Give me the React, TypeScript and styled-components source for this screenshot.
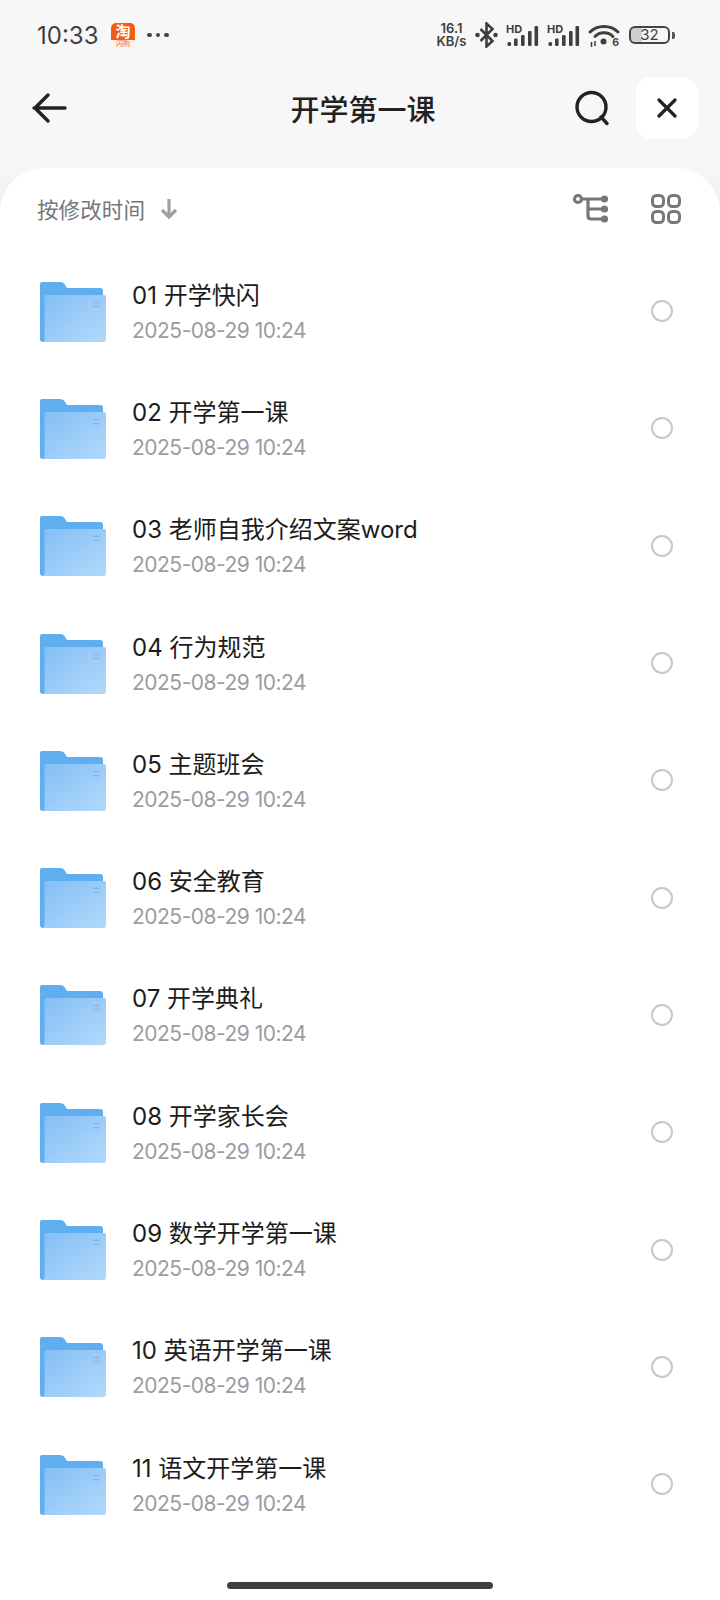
import React from "react";
import styled, { createGlobalStyle } from "styled-components";

const FONT = `Inter, "Noto Sans CJK SC", sans-serif`;

const FILES = [
  "01 开学快闪",
  "02 开学第一课",
  "03 老师自我介绍文案word",
  "04 行为规范",
  "05 主题班会",
  "06 安全教育",
  "07 开学典礼",
  "08 开学家长会",
  "09 数学开学第一课",
  "10 英语开学第一课",
  "11 语文开学第一课",
];

const GlobalStyle = createGlobalStyle`
  html, body {
    margin: 0;
    padding: 0;
    background: #f7f7f7;
  }
`;

const SPage = styled.div`
  width: 720px;
  height: 1600px;
  display: flex;
  flex-direction: column;
  background: #f7f7f7;
  font-family: ${FONT};
  overflow: hidden;
`;

const SStatusBar = styled.div`
  height: 70px;
  flex: none;
  display: flex;
  align-items: center;
  padding: 0 45px 0 37px;
  color: #3f3f3f;
`;

const STime = styled.div`
  font-size: 24px;
  font-weight: 400;
  width: 74px;
`;

const SAppBadge = styled.div`
  width: 24px;
  height: 25px;
  border-radius: 5px;
  overflow: hidden;
  background: #fff3ea;
  display: flex;
  flex-direction: column;
  align-items: center;
`;

const SAppBadgeTop = styled.div`
  width: 100%;
  height: 17px;
  background: #f25c13;
  color: #fff;
  font-size: 15px;
  font-weight: 700;
  line-height: 17px;
  text-align: center;
`;

const SAppBadgeBottom = styled.div`
  font-size: 7px;
  line-height: 8px;
  color: #e0703a;
`;

const SDots = styled.div`
  display: flex;
  gap: 4px;
  margin-left: 12px;
`;

const SDot = styled.span`
  width: 4.5px;
  height: 4.5px;
  border-radius: 50%;
  background: #444;
`;

const SStatusRight = styled.div`
  margin-left: auto;
  display: flex;
  align-items: center;
`;

const SSpeed = styled.div`
  font-size: 13px;
  font-weight: 600;
  line-height: 13px;
  text-align: center;
  width: 33px;
  color: #3f3f3f;
`;

const SSignal = styled.div`
  position: relative;
  width: 33px;
  height: 21px;
  margin-left: 8px;
`;

const SHd = styled.span`
  position: absolute;
  left: 0;
  top: 0;
  font-size: 11px;
  line-height: 9px;
  font-weight: 700;
  color: #3f3f3f;
`;

const SWifi = styled.div`
  position: relative;
  width: 32px;
  height: 25px;
  margin-left: 8px;
`;

const SWifiBand = styled.span`
  position: absolute;
  right: 1px;
  bottom: 0;
  font-size: 10.5px;
  line-height: 11px;
  font-weight: 700;
  color: #3f3f3f;
`;

const SBattery = styled.div`
  width: 41px;
  height: 18px;
  border: 2px solid #444;
  border-radius: 6px;
  box-sizing: border-box;
  margin-left: 9px;
  font-size: 15px;
  line-height: 14px;
  text-align: center;
  color: #3f3f3f;
  background: linear-gradient(90deg, #cfcfcf 0 30%, transparent 30%);
  background-clip: padding-box;
`;

const SBatteryNub = styled.span`
  width: 3px;
  height: 7px;
  border-radius: 0 2px 2px 0;
  background: #555;
  margin-left: 2px;
`;

const SHeader = styled.div`
  height: 98px;
  flex: none;
  display: flex;
  align-items: center;
  padding: 0 22px 22px 32px;
  box-sizing: border-box;
  position: relative;
`;

const STitle = styled.div`
  position: absolute;
  left: 0;
  right: 0;
  text-align: center;
  font-size: 29px;
  font-weight: 500;
  color: #222;
  padding-left: 6px;
`;

const SHeaderRight = styled.div`
  margin-left: auto;
  display: flex;
  align-items: center;
  gap: 26px;
`;

const SCloseButton = styled.div`
  width: 62px;
  height: 62px;
  background: #fff;
  border-radius: 15px;
  display: flex;
  align-items: center;
  justify-content: center;
`;

const SCardBack = styled.div`
  flex: 1;
  display: flex;
  background: linear-gradient(#f7f7f7, #eeeef4 44px);
`;

const SCard = styled.div`
  flex: 1;
  background: #fff;
  border-radius: 44px 44px 0 0;
  display: flex;
  flex-direction: column;
`;

const SSortBar = styled.div`
  height: 86px;
  flex: none;
  display: flex;
  align-items: center;
  padding: 0 39px 0 37px;
  box-sizing: border-box;
`;

const SSortLabel = styled.div`
  font-size: 21.6px;
  color: #777;
  margin-bottom: 6px;
`;

const SSortIcons = styled.div`
  margin-left: auto;
  display: flex;
  align-items: center;
  gap: 42px;
  margin-bottom: 4px;
`;

const SRow = styled.div`
  height: 117.3px;
  flex: none;
  display: flex;
  align-items: center;
  padding: 0 47px 0 40px;
`;

const SText = styled.div`
  margin-left: 26px;
  flex: 1;
  display: flex;
  flex-direction: column;
  gap: 4px;
`;

const SName = styled.div`
  font-size: 24px;
  line-height: 32px;
  color: #1c1c1c;
`;

const SDate = styled.div`
  font-size: 21px;
  line-height: 30px;
  letter-spacing: -0.5px;
  color: #9c9c9c;
`;

const SRadio = styled.div`
  width: 22px;
  height: 22px;
  border: 2px solid #c8c8c8;
  border-radius: 50%;
  box-sizing: border-box;
  margin-bottom: 3px;
`;

const SHomeBar = styled.div`
  width: 266px;
  height: 7px;
  flex: none;
  border-radius: 4px;
  background: #404040;
  margin: auto auto 11px;
`;

const Bluetooth = () => (
  <svg width="23" height="26" viewBox="0 0 23 26" style={{ marginLeft: 7 }}>
    <path d="M5.500 7l12 12-6 5.500V1.500L17.500 7l-12 12" fill="none" stroke="#3f3f3f" strokeWidth="2.600" />
    <circle cx="2.500" cy="13" r="2.300" fill="#3f3f3f" />
    <circle cx="20.500" cy="13" r="2.300" fill="#3f3f3f" />
  </svg>
);

const SignalBars = () => (
  <svg width="33" height="21" viewBox="0 0 33 21" style={{ position: "absolute", left: 0, top: 0 }}>
    <rect x="1.500" y="17" width="3.600" height="4" rx="1.500" fill="#3f3f3f" />
    <rect x="8" y="13.500" width="3.600" height="7.500" rx="1.200" fill="#3f3f3f" />
    <rect x="15" y="10" width="3.600" height="11" rx="1.200" fill="#3f3f3f" />
    <rect x="22" y="6" width="3.600" height="15" rx="1.200" fill="#3f3f3f" />
    <rect x="28.500" y="1" width="3.600" height="20" rx="1.200" fill="#3f3f3f" />
  </svg>
);

const WifiArcs = () => (
  <svg width="32" height="25" viewBox="0 0 32 25">
    <g fill="none" stroke="#3f3f3f" strokeWidth="3" strokeLinecap="round">
      <path d="M2 9C9 1.500 23 1.500 30 9" />
      <path d="M7 13.500C11.500 8.500 20.500 8.500 25 13.500" />
    </g>
    <circle cx="15.500" cy="18.500" r="3" fill="#3f3f3f" />
    <path d="M3.500 19v5M7 18v5" stroke="#3f3f3f" strokeWidth="1.600" />
  </svg>
);

const BackArrow = () => (
  <svg width="36" height="32" viewBox="0 0 36 32">
    <path d="M2 16H33M16 3L3 16L16 29" fill="none" stroke="#222" strokeWidth="3.400" strokeLinecap="round" strokeLinejoin="round" />
  </svg>
);

const SearchIcon = () => (
  <svg width="36" height="36" viewBox="0 0 36 36">
    <circle cx="17.500" cy="17" r="14.500" fill="none" stroke="#222" strokeWidth="3.400" />
    <path d="M27 27L33 33.500" fill="none" stroke="#222" strokeWidth="3.400" strokeLinecap="round" />
  </svg>
);

const CloseIcon = () => (
  <svg width="20" height="20" viewBox="0 0 20 20">
    <path d="M2 2L18 18M18 2L2 18" fill="none" stroke="#222" strokeWidth="3.200" strokeLinecap="round" />
  </svg>
);

const SortArrow = () => (
  <svg width="18" height="22" viewBox="0 0 18 22" style={{ marginLeft: 15, marginBottom: 4 }}>
    <path d="M9 1V19M2 12L9 19L16 12" fill="none" stroke="#a0a0a0" strokeWidth="3.200" />
  </svg>
);

const TreeIcon = () => (
  <svg width="36" height="30" viewBox="0 0 36 30">
    <g fill="none" stroke="#777" strokeWidth="3.200">
      <circle cx="5" cy="5" r="3.500" />
      <path d="M8.500 5H32M15 5V22Q15 25 18 25H32M15 15H32" />
    </g>
    <circle cx="31.500" cy="5" r="3.600" fill="#777" />
    <circle cx="31.500" cy="15" r="3.600" fill="#777" />
    <circle cx="31.500" cy="25" r="3.600" fill="#777" />
  </svg>
);

const GridIcon = () => (
  <svg width="30" height="30" viewBox="0 0 30 30">
    <g fill="none" stroke="#777" strokeWidth="3">
      <rect x="1.500" y="1.500" width="11" height="11" rx="4" />
      <rect x="17.500" y="1.500" width="11" height="11" rx="4" />
      <rect x="1.500" y="17.500" width="11" height="11" rx="4" />
      <rect x="17.500" y="17.500" width="11" height="11" rx="4" />
    </g>
  </svg>
);

const FolderIcon = () => (
  <svg width="66" height="60" viewBox="0 0 66 60" style={{ flex: "none", marginBottom: 2 }}>
    <defs>
      <linearGradient id="front" x1="0" y1="0" x2="1" y2="1">
        <stop offset="0" stopColor="#84bef4" />
        <stop offset="1" stopColor="#b2d9fc" />
      </linearGradient>
    </defs>
    <path
      d="M2 0H20Q23 0 24.500 2L27 6H60Q63 6 63 9V14H8V60H3Q0 60 0 57V2Q0 0 2 0Z"
      fill="#5eaef0"
    />
    <path d="M4.500 15Q4.500 13 6.500 13H64Q66 13 66 15V58Q66 60 64 60H2Q4.500 60 4.500 57Z" fill="url(#front)" />
    <path d="M53 20.500H60M53 24.500H60" stroke="#8db8e4" strokeWidth="1.500" />
  </svg>
);

const App = () => (
  <SPage>
    <GlobalStyle />
    <SStatusBar>
      <STime>10:33</STime>
      <SAppBadge>
        <SAppBadgeTop>淘</SAppBadgeTop>
        <SAppBadgeBottom>闪购</SAppBadgeBottom>
      </SAppBadge>
      <SDots>
        <SDot />
        <SDot />
        <SDot />
      </SDots>
      <SStatusRight>
        <SSpeed>
          16.1
          <br />
          KB/s
        </SSpeed>
        <Bluetooth />
        <SSignal>
          <SignalBars />
          <SHd>HD</SHd>
        </SSignal>
        <SSignal>
          <SignalBars />
          <SHd>HD</SHd>
        </SSignal>
        <SWifi>
          <WifiArcs />
          <SWifiBand>6</SWifiBand>
        </SWifi>
        <SBattery>32</SBattery>
        <SBatteryNub />
      </SStatusRight>
    </SStatusBar>
    <SHeader>
      <BackArrow />
      <STitle>开学第一课</STitle>
      <SHeaderRight>
        <SearchIcon />
        <SCloseButton>
          <CloseIcon />
        </SCloseButton>
      </SHeaderRight>
    </SHeader>
    <SCardBack>
      <SCard>
        <SSortBar>
          <SSortLabel>按修改时间</SSortLabel>
          <SortArrow />
          <SSortIcons>
            <TreeIcon />
            <GridIcon />
          </SSortIcons>
        </SSortBar>
        {FILES.map(name => (
          <SRow key={name}>
            <FolderIcon />
            <SText>
              <SName>{name}</SName>
              <SDate>2025-08-29 10:24</SDate>
            </SText>
            <SRadio />
          </SRow>
        ))}
        <SHomeBar />
      </SCard>
    </SCardBack>
  </SPage>
);

export default App;
